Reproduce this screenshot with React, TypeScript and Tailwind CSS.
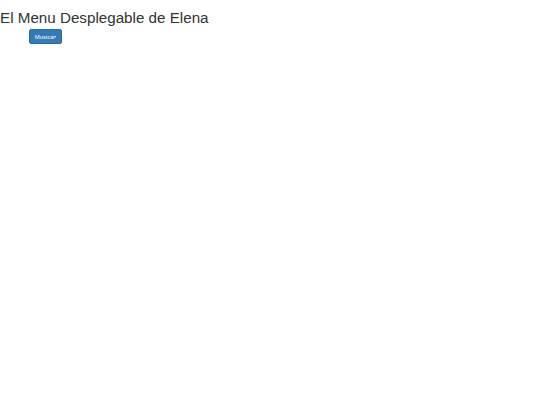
export default function App() {
  return (
    <div className="min-h-screen bg-white text-[#333]" style={{ fontFamily: '"Liberation Sans", Arial, sans-serif' }}>
      <h1 className="text-[15.2px] leading-[18px] pt-[9px] m-0 font-normal text-[#333]">El Menu Desplegable de Elena</h1>
      <div className="pl-[29px] pt-[2px]">
        <button className="flex items-center h-[15px] w-[33px] justify-center rounded-[2px] bg-[#337ab7] border border-[#2e6da4] text-white text-[6px] leading-none">
          Musica
          <span className="ml-[0.5px] inline-block w-0 h-0 border-l-[1.5px] border-r-[1.5px] border-t-[2px] border-l-transparent border-r-transparent border-t-white" />
        </button>
      </div>
    </div>
  );
}
